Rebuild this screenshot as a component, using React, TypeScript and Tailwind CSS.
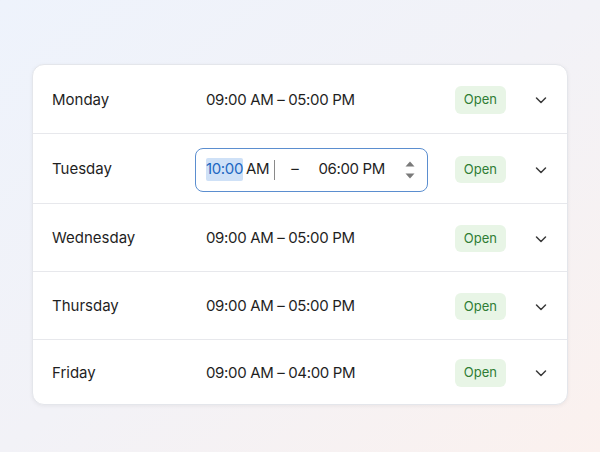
import React from 'react';

type Day = { name: string; from: string; to: string; h: string };

const days: Day[] = [
  { name: 'Monday', from: '09:00 AM', to: '05:00 PM', h: 'h-[69px]' },
  { name: 'Tuesday', from: '10:00 AM', to: '06:00 PM', h: 'h-[70px]' },
  { name: 'Wednesday', from: '09:00 AM', to: '05:00 PM', h: 'h-[68px]' },
  { name: 'Thursday', from: '09:00 AM', to: '05:00 PM', h: 'h-[68px]' },
  { name: 'Friday', from: '09:00 AM', to: '04:00 PM', h: 'h-[64px]' },
];

const Chevron = () => (
  <svg viewBox="0 0 12 12" className="h-3 w-3 text-[#3a3a3a]" fill="none" stroke="currentColor" strokeWidth="1.5" strokeLinecap="round" strokeLinejoin="round">
    <path d="M1.5 4l4.5 4.5L10.5 4" />
  </svg>
);

const TimeEditor = () => (
  <div className="-ml-[11px] flex h-[44px] w-[233px] items-center rounded-lg border border-[#5b8ecf] bg-white pl-[10px] pr-[11px] tracking-[-0.35px]">
    <span className="rounded-[2px] bg-[#cfe1f7] text-[#1d67c2]">10:00</span>
    <span className="ml-[3px]">AM</span>
    <span className="ml-[5px] h-[20px] w-px bg-[#8a8a8a]" />
    <span className="ml-[16px]">–</span>
    <span className="ml-[20px]">06:00 PM</span>
    <svg viewBox="0 0 12 24" className="ml-auto h-[24px] w-[12px]" fill="#7a7a7a">
      <path d="M6 3.5l4.5 5h-9z" />
      <path d="M6 20.5l4.5-5h-9z" />
    </svg>
  </div>
);

export default function App() {
  return (
    <div
      className="flex min-h-[452px] w-full items-start justify-center bg-gradient-to-br from-[#eef3fc] via-[#f2f2f7] to-[#fbf1ee] pt-[64px]"
      style={{ fontFamily: 'Inter, "Noto Sans", sans-serif' }}
    >
      <div className="w-[536px] overflow-hidden rounded-xl border border-[#e4e6eb] bg-white shadow-[0_1px_4px_rgba(0,0,0,0.06)]">
        {days.map((d, i) => (
          <div
            key={d.name}
            className={`flex ${d.h} items-center pl-[19px] pr-5 pt-[2px] text-[15px] text-[#1f1f1f] ${i < days.length - 1 ? 'border-b border-[#e7e8ec]' : ''}`}
          >
            <div className="w-[154px]">{d.name}</div>
            <div className="flex-1">
              {d.name === 'Tuesday' ? (
                <TimeEditor />
              ) : (
                <span className="tracking-[-0.35px]">
                  {d.from} – {d.to}
                </span>
              )}
            </div>
            <span className="rounded-md bg-[#e8f5e6] px-[9px] py-[4px] text-[13px] text-[#2f7d35]">Open</span>
            <div className="ml-[29px] flex w-[12px] justify-center">
              <Chevron />
            </div>
          </div>
        ))}
      </div>
    </div>
  );
}
